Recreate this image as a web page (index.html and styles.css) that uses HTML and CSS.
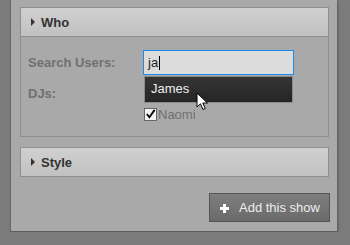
FILE: index.html
```html
<!DOCTYPE html>
<html lang="en">
<head>
    <meta charset="UTF-8">
    <title>Add show</title>
    <link rel="stylesheet" href="styles.css">
</head>
<body>
    <div class="panel">
        <!-- Who section -->
        <section class="group">
            <h2 class="group-head"><span class="arrow"></span>Who</h2>
            <div class="group-body">
                <div class="row">
                    <label class="row-label" for="search">Search Users:</label>
                    <div class="field">
                        <div class="search-box" id="search">ja<span class="caret"></span></div>
                        <ul class="suggest">
                            <li>James</li>
                        </ul>
                        <svg class="pointer" width="13" height="19" viewBox="0 0 13 19">
                            <path d="M1 1 L1 15 L4.5 11.8 L7 17.5 L9.3 16.5 L6.8 11 L11.5 11 Z" fill="#fff" stroke="#000" stroke-width="1"/>
                        </svg>
                    </div>
                </div>
                <div class="row row-djs">
                    <span class="row-label">DJs:</span>
                    <ul class="dj-list">
                        <li>
                            <span class="check">
                                <svg width="12" height="12" viewBox="0 0 12 12"><path d="M2 6 L4.8 9.5 L10.5 1.5" fill="none" stroke="#000" stroke-width="2"/></svg>
                            </span>Naomi
                        </li>
                    </ul>
                </div>
            </div>
        </section>

        <!-- Style section -->
        <section class="group">
            <h2 class="group-head closed"><span class="arrow"></span>Style</h2>
        </section>

        <div class="actions">
            <button class="add-btn"><span class="plus"></span>Add this show</button>
        </div>
    </div>
</body>
</html>
```

FILE: styles.css
```css
body {
    margin: 0;
    background-color: #7b7b7b;
    font-family: "Liberation Sans", Arial, sans-serif;
    font-size: 13px;
}

.panel {
    position: relative;
    margin-left: 10px;
    width: 309px;
    height: 224px;
    padding: 7px 8px 0 9px;
    background-color: #a9a9a9;
    border-left: 1px solid #666;
    border-bottom: 1px solid #5c5c5c;
    box-shadow: 1px 1px 2px rgba(0, 0, 0, 0.3);
}

.group {
    margin-bottom: 10px;
}

.group-head {
    display: flex;
    align-items: center;
    height: 28px;
    margin: 0;
    padding-left: 10px;
    border: 1px solid #8f8f8f;
    background: linear-gradient(#d0d0d0, #c1c1c1);
    color: #333;
    font-size: 13px;
    font-weight: bold;
}

.arrow {
    width: 0;
    height: 0;
    margin-right: 6px;
    border-top: 4px solid transparent;
    border-bottom: 4px solid transparent;
    border-left: 4px solid #333;
}

.group-body {
    padding: 13px 0 15px 7px;
    border: 1px solid #8f8f8f;
    border-top: none;
}

.row {
    display: flex;
}

.row-label {
    width: 115px;
    color: #707070;
    font-weight: bold;
    line-height: 25px;
}

.field {
    position: relative;
}

.search-box {
    width: 145px;
    height: 23px;
    padding-left: 4px;
    border: 1px solid #1a8cf0;
    background-color: #dcdcdc;
    color: #222;
    line-height: 23px;
}

.caret {
    display: inline-block;
    width: 1px;
    height: 14px;
    margin-left: 1px;
    vertical-align: -3px;
    background-color: #000;
}

.suggest {
    position: absolute;
    top: 26px;
    left: 1px;
    width: 147px;
    margin: 0;
    padding: 0;
    list-style: none;
    border: 1px solid #8a8a8a;
    background: linear-gradient(#353535, #252525);
    z-index: 2;
}

.suggest li {
    padding-left: 6px;
    height: 25px;
    line-height: 24px;
    color: #eee;
}

.pointer {
    position: absolute;
    top: 42px;
    left: 53px;
    z-index: 3;
}

.row-djs {
    margin-top: 11px;
}

.row-djs .row-label {
    line-height: 16px;
}

.dj-list {
    margin: 0;
    padding: 22px 0 0 1px;
    list-style: none;
}

.dj-list li {
    display: flex;
    align-items: center;
    height: 13px;
    color: #707070;
}

.check {
    display: inline-flex;
    width: 11px;
    height: 11px;
    margin-right: 1px;
    border: 1px solid #666;
    background-color: #f2f2f2;
}

.check svg {
    margin: -1px 0 0 0;
}

.actions {
    display: flex;
    justify-content: flex-end;
    margin-top: 16px;
    margin-right: -1px;
}

.add-btn {
    display: flex;
    align-items: center;
    width: 121px;
    height: 29px;
    padding: 0 0 0 10px;
    border: 1px solid #555;
    background: linear-gradient(#7e7e7e, #6a6a6a);
    color: #eee;
    font-family: "Liberation Sans", Arial, sans-serif;
    font-size: 13px;
    cursor: pointer;
}

.plus {
    position: relative;
    width: 8px;
    height: 8px;
    margin-right: 11px;
}

.plus::before,
.plus::after {
    content: "";
    position: absolute;
    background-color: #fff;
}

.plus::before {
    left: 3px;
    top: 0;
    width: 3px;
    height: 9px;
}

.plus::after {
    left: 0;
    top: 3px;
    width: 9px;
    height: 3px;
}
```
